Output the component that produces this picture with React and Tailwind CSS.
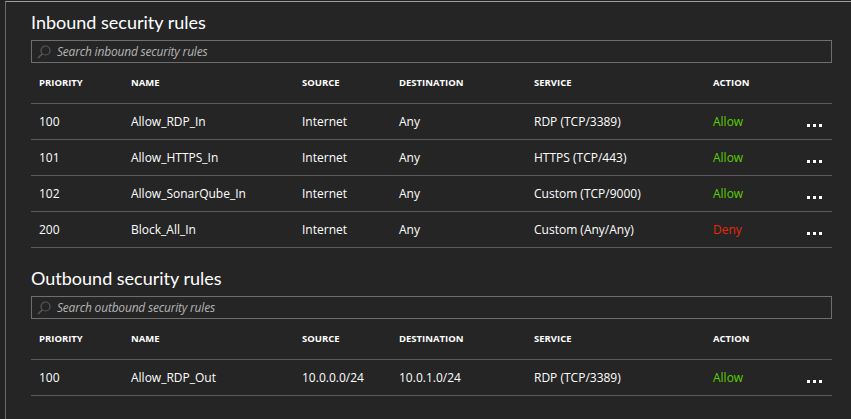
import React from "react";

const inbound = [
  ["100", "Allow_RDP_In", "Internet", "Any", "RDP (TCP/3389)", "Allow"],
  ["101", "Allow_HTTPS_In", "Internet", "Any", "HTTPS (TCP/443)", "Allow"],
  ["102", "Allow_SonarQube_In", "Internet", "Any", "Custom (TCP/9000)", "Allow"],
  ["200", "Block_All_In", "Internet", "Any", "Custom (Any/Any)", "Deny"],
];
const outbound = [
  ["100", "Allow_RDP_Out", "10.0.0.0/24", "10.0.1.0/24", "RDP (TCP/3389)", "Allow"],
];

const cols = "grid grid-cols-[92px_171px_97px_135px_179px_94px_32px]";

function SearchIcon() {
  return (
    <svg width="14" height="14" viewBox="0 0 14 14" fill="none" className="shrink-0">
      <circle cx="8.5" cy="5.5" r="4.5" stroke="#5a5a5a" strokeWidth="1.2" />
      <path d="M5.3 8.7 L1 13" stroke="#5a5a5a" strokeWidth="1.4" />
    </svg>
  );
}

function Dots() {
  return (
    <div className="flex gap-[3px] translate-y-[4px]">
      <span className="w-[3px] h-[3px] bg-white" />
      <span className="w-[3px] h-[3px] bg-white" />
      <span className="w-[3px] h-[3px] bg-white" />
    </div>
  );
}

function Section({ title, placeholder, rows }) {
  return (
    <div>
      <h2 className="text-[18px] leading-[24px] text-white" style={{ fontFamily: 'Lato, "Open Sans", sans-serif' }}>{title}</h2>
      <div className="mt-[6px] h-[23px] border border-[#6e6e6e] flex items-center gap-[6px] pl-[5px]">
        <SearchIcon />
        <span className="italic text-[12px] text-[#b5b5b5] tracking-[-0.2px]">{placeholder}</span>
      </div>
      <div className={`${cols} h-[41px] items-center border-b border-[#5a5a5a] text-[9.5px] font-bold text-white uppercase`}>
        <div className="px-2">Priority</div>
        <div className="px-2">Name</div>
        <div className="px-2">Source</div>
        <div className="px-2">Destination</div>
        <div className="px-2">Service</div>
        <div className="px-2">Action</div>
        <div />
      </div>
      {rows.map((r, i) => (
        <div key={i} className={`${cols} h-[36px] items-center border-b border-[#5a5a5a] text-[12px] text-white`}>
          <div className="px-2">{r[0]}</div>
          <div className="px-2">{r[1]}</div>
          <div className="px-2">{r[2]}</div>
          <div className="px-2">{r[3]}</div>
          <div className="px-2">{r[4]}</div>
          <div className={`px-2 ${r[5] === "Allow" ? "text-[#5cd000]" : "text-[#e8280c]"}`}>{r[5]}</div>
          <div className="px-2 flex"><Dots /></div>
        </div>
      ))}
    </div>
  );
}

export default function App() {
  return (
    <div className="w-[851px] h-[419px] bg-[#232323] overflow-hidden" style={{ fontFamily: '"Open Sans", "Noto Sans", sans-serif' }}>
      <div className="ml-[5px] mt-[1px] h-[418px] bg-[#252525] border-l border-t border-l-[#6a6a6a] border-t-[#a0a0a0] pl-[25px] pr-[19px] pt-[8px] flex flex-col gap-[18px]">
        <Section title="Inbound security rules" placeholder="Search inbound security rules" rows={inbound} />
        <Section title="Outbound security rules" placeholder="Search outbound security rules" rows={outbound} />
      </div>
    </div>
  );
}
